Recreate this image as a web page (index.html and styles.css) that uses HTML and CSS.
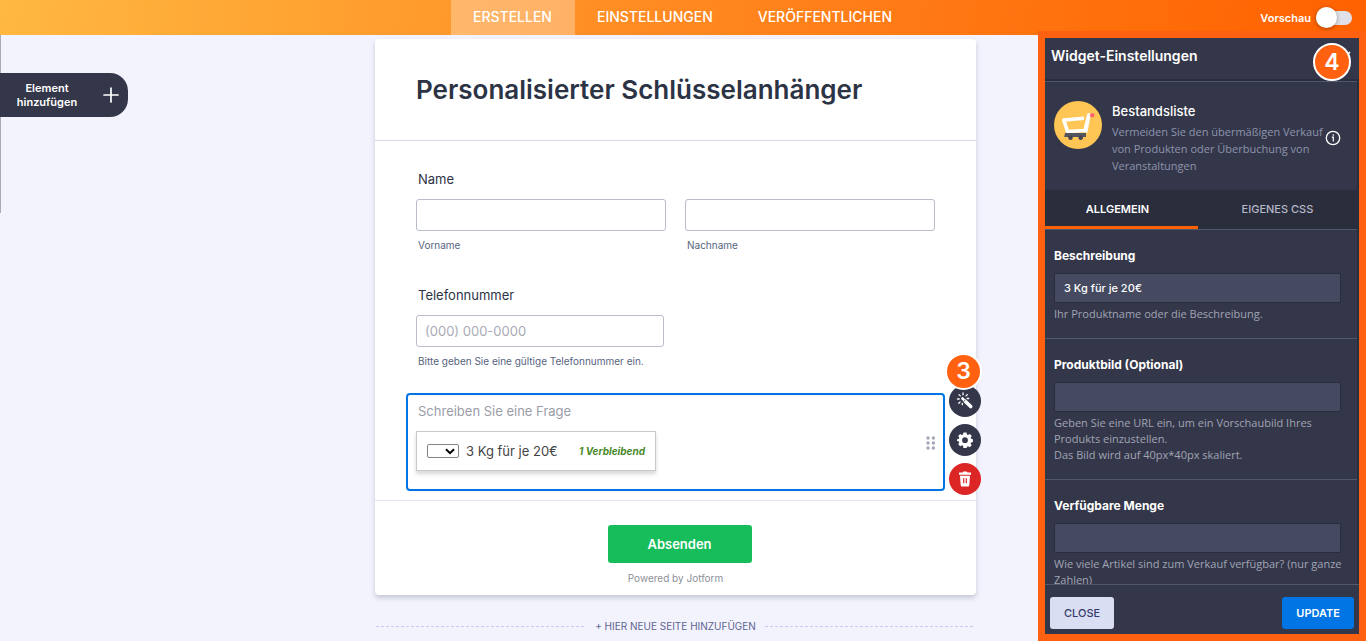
FILE: index.html
```html
<!DOCTYPE html>
<html lang="de">
<head>
<meta charset="utf-8">
<meta name="viewport" content="width=device-width, initial-scale=1">
<title>Personalisierter Schlüsselanhänger</title>
<link rel="stylesheet" href="styles.css">
</head>
<body>
<header class="topbar">
  <nav class="tabs">
    <a class="tab tab-active" href="#build">ERSTELLEN</a>
    <a class="tab" href="#settings">EINSTELLUNGEN</a>
    <a class="tab" href="#publish">VERÖFFENTLICHEN</a>
  </nav>
  <label class="preview">Vorschau <input class="switch" type="checkbox" role="switch"></label>
</header>

<main class="stage">
  <button class="add-element" type="button">
    <span class="add-text">Element hinzufügen</span>
    <svg width="16" height="16" viewBox="0 0 16 16" aria-hidden="true"><path d="M8 1v14M1 8h14" stroke="#fff" stroke-width="1.7" stroke-linecap="round"/></svg>
  </button>

  <div class="column">
    <form class="card">
      <h1 class="title">Personalisierter Schlüsselanhänger</h1>
      <div class="fields">
        <fieldset class="question">
          <legend class="label">Name</legend>
          <div class="pair">
            <div class="field">
              <input class="box" id="first" type="text">
              <label class="sub" for="first">Vorname</label>
            </div>
            <div class="field">
              <input class="box" id="last" type="text">
              <label class="sub" for="last">Nachname</label>
            </div>
          </div>
        </fieldset>
        <div class="question">
          <label class="label" for="phone">Telefonnummer</label>
          <div class="field phone">
            <input class="box" id="phone" type="tel" placeholder="(000) 000-0000">
            <span class="sub">Bitte geben Sie eine gültige Telefonnummer ein.</span>
          </div>
        </div>
        <div class="selected">
          <span class="label muted">Schreiben Sie eine Frage</span>
          <div class="widget">
            <span class="pick">
              <select class="qty" id="qty"><option></option></select>
              <svg class="chevron" width="10" height="7" viewBox="0 0 10 7" aria-hidden="true"><path d="M1 1.2l4 4 4-4" fill="none" stroke="#000" stroke-width="2"/></svg>
            </span>
            <label class="product" for="qty">3 Kg für je 20€</label>
            <span class="remaining">1 Verbleibend</span>
          </div>
          <svg class="grip" width="10" height="14" viewBox="0 0 10 14" fill="#a4a7b8" aria-hidden="true"><circle cx="2" cy="2" r="1.7"/><circle cx="7.4" cy="2" r="1.7"/><circle cx="2" cy="7" r="1.7"/><circle cx="7.4" cy="7" r="1.7"/><circle cx="2" cy="12" r="1.7"/><circle cx="7.4" cy="12" r="1.7"/></svg>
          <div class="actions">
            <button class="round" type="button" aria-label="Assistent">
              <svg width="18" height="18" viewBox="0 0 18 18" aria-hidden="true"><g stroke="#fff" fill="none" stroke-linecap="round"><path d="M8.7 8.7l6 5.8" stroke-width="3.6"/><path d="M6.5 6.5l.5.5" stroke-width="2.6"/><path d="M7 1v1.8M3 2.6l1.3 1.3M1.5 7h1.7M2.8 11.2l1.3-1.3M6.3 11.3v1.4M11.3 2.6l-1.2 1.3M12.7 6.5h-1.6" stroke-width="1.3"/></g><path d="M7.5 9.8l2.3-2.3" stroke="#343749" stroke-width=".8"/></svg>
            </button>
            <button class="round" type="button" aria-label="Einstellungen">
              <svg width="16" height="16" viewBox="0 0 16 16" aria-hidden="true"><path fill="#fff" fill-rule="evenodd" d="M6.5 .6h3l.5 2 1 .4 1.8-1.1 2 2-1.1 1.8.5 1.1 1.7.4v2.8l-1.8.5-.5 1.1 1.1 1.7-2 2-1.7-1.1-1 .5-.5 1.8h-3L6 13.7l-1.1-.5-1.7 1.1-2-2 1.1-1.7-.5-1.1-1.7-.5V7.200l1.800-.4.4-1.100-1.100-1.800 2-2L4.900 3 6 2.600zM8 5.300a2.900 2.900 0 1 0 0 5.800 2.900 2.900 0 0 0 0-5.800z"/></svg>
            </button>
            <button class="round delete" type="button" aria-label="Löschen">
              <svg width="14" height="16" viewBox="0 0 14 16" aria-hidden="true"><path d="M1 1.5h3.500L5.300.5h3.400l.8 1H13v2.300H1z" fill="#fff"/><path d="M2 4.800h10l-.7 9.200c-.1 1-.6 1.500-1.500 1.500H4.200c-.9 0-1.400-.5-1.500-1.500z" fill="#fff"/><path d="M5.700 7.200v5M8.300 7.200v5" stroke="#dc2626" stroke-width="1.200"/></svg>
            </button>
            <span class="badge badge-three">3</span>
          </div>
        </div>
      </div>
      <div class="submit-row">
        <button class="submit" type="submit">Absenden</button>
        <span class="powered">Powered by Jotform</span>
      </div>
    </form>
    <button class="new-page" type="button">+ HIER NEUE SEITE HINZUFÜGEN</button>
  </div>
</main>

<aside class="panel">
  <div class="panel-head">
    <h2 class="panel-title">Widget-Einstellungen</h2>
    <button class="close" type="button" aria-label="Schließen">
      <svg width="12" height="12" viewBox="0 0 12 12" aria-hidden="true"><path d="M1 1l10 10M11 1L1 11" stroke="#fff" stroke-width="1.6"/></svg>
    </button>
    <span class="badge badge-four">4</span>
  </div>
  <div class="panel-scroll">
    <div class="about">
      <svg class="cart" width="48" height="48" viewBox="0 0 48 48" aria-hidden="true"><circle cx="24" cy="24" r="24" fill="#ffc655"/><path d="M35 15L32 31.500" fill="none" stroke="#f1f1f1" stroke-width="3"/><path d="M30 17.300L9.800 19l3.700 11.500L31 29.500 34.800 14h3" fill="none" stroke="#fff" stroke-width="3.600" stroke-linejoin="round"/><path d="M11 32h21v4H10.200z" fill="#525560"/><circle cx="16.500" cy="36.800" r="2.300" fill="#414450"/><circle cx="26.700" cy="36.800" r="2.300" fill="#414450"/><circle cx="38.200" cy="14.300" r="2.300" fill="#ff6666"/></svg>
      <div class="about-text">
        <h3 class="about-name">Bestandsliste</h3>
        <p class="about-copy">Vermeiden Sie den übermäßigen Verkauf von Produkten oder Überbuchung von Veranstaltungen</p>
      </div>
      <svg class="info" width="16" height="16" viewBox="0 0 16 16" aria-hidden="true"><circle cx="8" cy="8" r="6.700" fill="none" stroke="#fff" stroke-width="1.300"/><path d="M6.800 7.200h1.500v4.300M8.300 4.300v1.500" fill="none" stroke="#fff" stroke-width="1.200"/></svg>
    </div>
    <div class="panel-tabs">
      <button class="panel-tab panel-tab-active" type="button">ALLGEMEIN</button>
      <button class="panel-tab" type="button">EIGENES CSS</button>
    </div>
    <div class="setting">
      <label class="setting-label" for="desc">Beschreibung</label>
      <input class="setting-input" id="desc" type="text" value="3 Kg für je 20€">
      <p class="hint">Ihr Produktname oder die Beschreibung.</p>
    </div>
    <div class="setting">
      <label class="setting-label" for="image">Produktbild (Optional)</label>
      <input class="setting-input" id="image" type="text">
      <p class="hint">Geben Sie eine URL ein, um ein Vorschaubild Ihres Produkts einzustellen.<br>Das Bild wird auf 40px*40px skaliert.</p>
    </div>
    <div class="setting">
      <label class="setting-label" for="amount">Verfügbare Menge</label>
      <input class="setting-input" id="amount" type="text">
      <p class="hint">Wie viele Artikel sind zum Verkauf verfügbar? (nur ganze Zahlen)</p>
    </div>
  </div>
  <div class="panel-foot">
    <button class="foot-btn" type="button">CLOSE</button>
    <button class="foot-btn update" type="button">UPDATE</button>
  </div>
</aside>
</body>
</html>
```
FILE: styles.css
```css
* { box-sizing: border-box; }

body {
  margin: 0;
  height: 100vh;
  display: flex;
  flex-direction: column;
  overflow: hidden;
  background: #f3f3fe;
  color: #2c3345;
  font-family: Inter, "Liberation Sans", sans-serif;
}

button, input, select { font-family: inherit; margin: 0; }
button { border: 0; cursor: pointer; }
h1, h2, h3, p { margin: 0; }

/* Top bar */
.topbar {
  flex: none;
  height: 35px;
  display: grid;
  grid-template-columns: 1fr auto 1fr;
  background: linear-gradient(100deg, #ffb841, #ff982b 34%, #ff7a15 66%, #ff6100);
}
.tabs { grid-column: 2; display: flex; }
.tab {
  padding: 0 23px 0 22px;
  line-height: 34px;
  font-size: 14px;
  font-weight: 500;
  color: #fff;
  text-decoration: none;
}
.tab-active { background: rgba(255, 255, 255, .3); }
.preview {
  display: flex;
  align-items: center;
  justify-content: flex-end;
  gap: 5px;
  padding-right: 14px;
  font-size: 11px;
  line-height: 34px;
  font-weight: 600;
  color: #fff;
}
.switch {
  appearance: none;
  position: relative;
  width: 36px;
  height: 14px;
  border-radius: 7px;
  background: #e0e1e8;
}
.switch::before {
  content: "";
  position: absolute;
  left: 0;
  top: -4px;
  width: 21px;
  height: 21px;
  border-radius: 50%;
  background: #fff;
  box-shadow: 0 1px 4px rgba(0, 0, 0, .35);
}

/* Form builder */
.stage {
  flex: 1;
  position: relative;
  display: flex;
  justify-content: center;
  padding: 4px 15px 0 0;
}
.stage::before {
  content: "";
  position: absolute;
  left: 0;
  top: 0;
  width: 1px;
  height: 178px;
  background: #a9abb9;
}
.add-element {
  position: absolute;
  left: 0;
  top: 38px;
  width: 128px;
  height: 44px;
  display: flex;
  align-items: center;
  justify-content: space-between;
  padding: 0 9px 0 12px;
  border-radius: 0 18px 18px 0;
  background: #343749;
  color: #fff;
}
.add-text { width: 70px; font-size: 11px; line-height: 14px; font-weight: 600; }

.column { width: 601px; }
.card {
  border-radius: 4px;
  background: #fff;
  box-shadow: 0 3px 5px rgba(84, 95, 111, .28);
}
.title {
  padding: 31px 41px 30px;
  border-bottom: 1px solid #d7d8e1;
  font-size: 26px;
  line-height: 40px;
  font-weight: 560;
}
.fields { padding: 28px 31px 8px; }
.question { margin: 0 10px 32px; padding: 0; border: 0; }
.label {
  display: block;
  padding: 0 2px;
  font-size: 13px;
  line-height: 20px;
  font-weight: 400;
}
.pair { display: grid; grid-template-columns: 1fr 1fr; gap: 19px; }
.field { display: flex; flex-direction: column; gap: 6px; padding-top: 10px; }
.phone { width: 248px; }
.box {
  width: 100%;
  height: 32px;
  padding: 0 8px;
  border: 1px solid #b8bdc9;
  border-radius: 3px;
  background: #fff;
  font-size: 13px;
}
.box::placeholder { color: #a9abb5; }
.sub { padding: 0 2px; font-size: 10px; line-height: 16px; color: #57647e; }
.selected {
  position: relative;
  margin-top: -8px;
  padding: 6px 8px 18px;
  border: 2px solid #0075e3;
  border-radius: 4px;
}
.muted { margin-bottom: 10px; color: #9b9da8; }
.widget {
  width: 240px;
  height: 40px;
  display: flex;
  align-items: center;
  padding: 0 10px;
  border: 1px solid #c8c8c8;
  box-shadow: 0 3px 4px rgba(0, 0, 0, .16);
}
.pick { position: relative; display: flex; }
.qty {
  appearance: none;
  width: 32px;
  height: 14px;
  border: 1px solid #858585;
  border-radius: 2px;
  background: #fff;
}
.chevron { position: absolute; right: 4px; top: 4px; }
.product { margin-left: 7px; font-size: 13px; color: #444; }
.remaining {
  margin-left: auto;
  font-size: 10px;
  font-weight: 700;
  font-style: italic;
  color: #4a8a2a;
}
.grip { position: absolute; right: 7px; top: 41px; }
.actions {
  position: absolute;
  left: 541px;
  top: -10px;
  display: flex;
  flex-direction: column;
  gap: 7px;
}
.round {
  width: 32px;
  height: 32px;
  display: grid;
  place-items: center;
  padding: 0;
  border-radius: 50%;
  background: #343749;
}
.delete { background: #dc2626; }
.badge {
  position: absolute;
  display: grid;
  place-items: center;
  width: 38px;
  height: 38px;
  border: 2px solid #fff;
  border-radius: 50%;
  background: #ff6110;
  color: #fff;
  font-size: 23px;
  line-height: 1;
  font-weight: 600;
}
.badge-three { left: -4px; top: -32px; width: 37px; height: 37px; }
.badge-four { right: 8px; top: 5px; }

.submit-row {
  display: flex;
  flex-direction: column;
  align-items: center;
  gap: 7px;
  margin-top: 1px;
  padding: 24px 0 9px;
  border-top: 1px solid #e3e4f0;
}
.submit {
  width: 144px;
  height: 38px;
  margin-left: 8px;
  border-radius: 3px;
  background: #18bd5b;
  color: #fff;
  font-size: 13px;
  font-weight: 600;
}
.powered { font-size: 10px; line-height: 16px; color: #8d8f98; }
.new-page {
  width: 100%;
  display: flex;
  align-items: center;
  gap: 9px;
  margin-top: 21px;
  padding: 0 1px;
  background: none;
  font-size: 10px;
  line-height: 20px;
  color: #5f6492;
}
.new-page::before, .new-page::after {
  content: "";
  flex: 1;
  height: 1px;
  background: repeating-linear-gradient(90deg, #c3cbf3 0 3px, transparent 3px 5px);
}

/* Widget settings */
.panel {
  position: absolute;
  right: 0;
  top: 31px;
  bottom: 0;
  width: 328px;
  display: flex;
  flex-direction: column;
  border: 7px solid #ff6110;
  background: #343749;
  color: #fff;
}
.panel-head {
  position: relative;
  flex: none;
  height: 43px;
  padding: 8px 6px;
  border-bottom: 2px solid #2a2d3b;
}
.panel-title { font-size: 14px; line-height: 20px; font-weight: 600; }
.close {
  position: absolute;
  right: 8px;
  top: 13px;
  display: flex;
  padding: 0;
  background: none;
}
.panel-scroll {
  flex: 1;
  min-height: 0;
  overflow: hidden;
  border-right: 2px solid #2a2d3b;
}
.about {
  position: relative;
  display: flex;
  gap: 10px;
  padding: 19px 9px 16px;
  border-top: 1px solid #51586a;
}
.cart { flex: none; }
.about-name { margin-bottom: 2px; font-size: 13px; line-height: 20px; font-weight: 500; }
.about-copy, .hint {
  font-family: "Open Sans", "Noto Sans", sans-serif;
  font-size: 11px;
  font-weight: 500;
}
.about-copy { width: 212px; line-height: 17px; color: #8d94ae; }
.info { position: absolute; right: 16px; top: 48px; }
.panel-tabs {
  display: flex;
  height: 40px;
  border-bottom: 1px solid #51586a;
  background: #2a2d3b;
}
.panel-tab {
  flex: 1;
  padding: 2px 0 0;
  border-bottom: 3px solid transparent;
  background: none;
  color: #b5b8c9;
  font-size: 11px;
  font-weight: 500;
}
.panel-tab-active {
  flex: 0 0 49%;
  padding-right: 8px;
  border-color: #ff6100;
  color: #fff;
  font-weight: 600;
}
.setting { padding: 16px 16px 16px 9px; border-bottom: 1px solid #4f596a; }
.setting-label {
  display: block;
  margin-bottom: 7px;
  font-size: 12px;
  line-height: 20px;
  font-weight: 700;
}
.setting-input {
  display: block;
  width: 100%;
  height: 30px;
  margin-bottom: 3px;
  padding: 0 9px;
  border: 1px solid #2a2d3b;
  border-radius: 2px;
  background: #454a60;
  color: #fff;
  font-size: 11px;
  font-weight: 500;
}
.hint { margin-right: -14px; line-height: 16px; color: #a0a4b5; }
.panel-foot {
  flex: none;
  display: flex;
  justify-content: space-between;
  padding: 12px 5px 5px;
  border-top: 1px solid #51586a;
}
.foot-btn {
  height: 32px;
  padding: 0 14px;
  border-radius: 3px;
  background: #dadef3;
  color: #343c6a;
  font-size: 11px;
  font-weight: 500;
}
.update { background: #0075e3; color: #fff; font-weight: 600; }
```
